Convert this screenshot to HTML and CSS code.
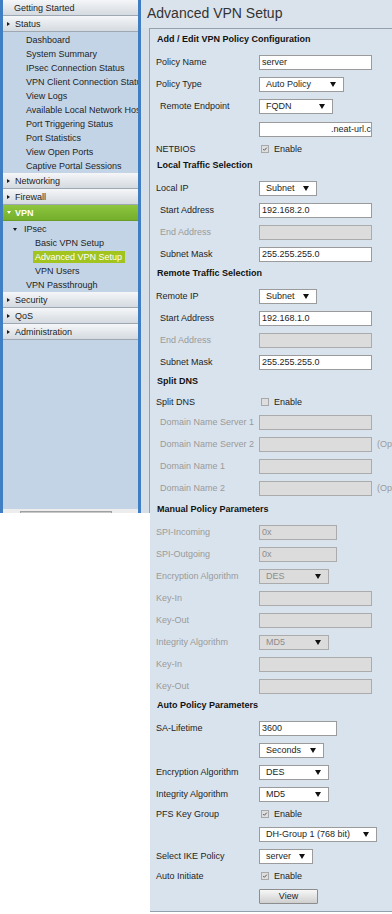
FILE: index.html
```html
<!DOCTYPE html>
<html lang="en">
<head>
  <meta charset="UTF-8" />
  <meta name="viewport" content="width=device-width, initial-scale=1.0" />
  <title>Advanced VPN Setup</title>
  <link rel="stylesheet" href="styles.css">
</head>
<body>
  <div class="page">
    <div class="sidebar">
      <div class="menu-head plain">Getting Started</div>
      <div class="menu-head"><span class="tri-right"></span>Status</div>
      <div class="submenu">
        <div class="menu-item">Dashboard</div>
        <div class="menu-item">System Summary</div>
        <div class="menu-item">IPsec Connection Status</div>
        <div class="menu-item">VPN Client Connection Status</div>
        <div class="menu-item">View Logs</div>
        <div class="menu-item">Available Local Network Hosts</div>
        <div class="menu-item">Port Triggering Status</div>
        <div class="menu-item">Port Statistics</div>
        <div class="menu-item">View Open Ports</div>
        <div class="menu-item">Captive Portal Sessions</div>
      </div>
      <div class="menu-head"><span class="tri-right"></span>Networking</div>
      <div class="menu-head"><span class="tri-right"></span>Firewall</div>
      <div class="menu-head active"><span class="tri-down"></span>VPN</div>
      <div class="submenu">
        <div class="menu-item group"><span class="tri-down dark"></span>IPsec</div>
        <div class="menu-item sub">Basic VPN Setup</div>
        <div class="menu-item sub"><span class="current">Advanced VPN Setup</span></div>
        <div class="menu-item sub">VPN Users</div>
        <div class="menu-item">VPN Passthrough</div>
      </div>
      <div class="menu-head"><span class="tri-right"></span>Security</div>
      <div class="menu-head"><span class="tri-right"></span>QoS</div>
      <div class="menu-head"><span class="tri-right"></span>Administration</div>
      <div class="menu-fill"></div>
      <div class="menu-scroll"><span class="thumb"></span></div>
    </div>

    <h1 class="page-title">Advanced VPN Setup</h1>
    <div class="gutter"></div>

    <div class="panel">
      <div class="section">Add / Edit VPN Policy Configuration</div>
      <div class="row"><span class="lbl">Policy Name</span><input class="field" type="text" value="server"></div>
      <div class="row"><span class="lbl">Policy Type</span><div class="select w85">Auto Policy</div></div>
      <div class="row"><span class="lbl indent">Remote Endpoint</span><div class="select w74">FQDN</div></div>
      <div class="row tall"><span class="lbl"></span><input class="field right" type="text" value=".neat-url.c"></div>
      <div class="row check-row short"><span class="lbl">NETBIOS</span><span class="check on"><svg viewBox="0 0 8 8"><path d="M1.6 4.1 L3.2 5.7 L6.4 2.2"/></svg></span>Enable</div>

      <div class="section">Local Traffic Selection</div>
      <div class="row"><span class="lbl">Local IP</span><div class="select w58">Subnet</div></div>
      <div class="row"><span class="lbl indent">Start Address</span><input class="field" type="text" value="192.168.2.0"></div>
      <div class="row"><span class="lbl indent off">End Address</span><input class="field" type="text" disabled></div>
      <div class="row"><span class="lbl indent">Subnet Mask</span><input class="field" type="text" value="255.255.255.0"></div>

      <div class="section">Remote Traffic Selection</div>
      <div class="row"><span class="lbl">Remote IP</span><div class="select w58">Subnet</div></div>
      <div class="row"><span class="lbl indent">Start Address</span><input class="field" type="text" value="192.168.1.0"></div>
      <div class="row"><span class="lbl indent off">End Address</span><input class="field" type="text" disabled></div>
      <div class="row"><span class="lbl indent">Subnet Mask</span><input class="field" type="text" value="255.255.255.0"></div>

      <div class="section">Split DNS</div>
      <div class="row check-row"><span class="lbl">Split DNS</span><span class="check"></span>Enable</div>
      <div class="row"><span class="lbl indent off">Domain Name Server 1</span><input class="field" type="text" disabled></div>
      <div class="row"><span class="lbl indent off">Domain Name Server 2</span><input class="field" type="text" disabled><span class="note">(Optional)</span></div>
      <div class="row"><span class="lbl indent off">Domain Name 1</span><input class="field" type="text" disabled></div>
      <div class="row"><span class="lbl indent off">Domain Name 2</span><input class="field" type="text" disabled><span class="note">(Optional)</span></div>

      <div class="section spaced">Manual Policy Parameters</div>
      <div class="row"><span class="lbl off">SPI-Incoming</span><input class="field w78" type="text" value="0x" disabled></div>
      <div class="row"><span class="lbl off">SPI-Outgoing</span><input class="field w78" type="text" value="0x" disabled></div>
      <div class="row"><span class="lbl off">Encryption Algorithm</span><div class="select w70 off">DES</div></div>
      <div class="row"><span class="lbl off">Key-In</span><input class="field" type="text" disabled></div>
      <div class="row"><span class="lbl off">Key-Out</span><input class="field" type="text" disabled></div>
      <div class="row"><span class="lbl off">Integrity Algorithm</span><div class="select w70 off">MD5</div></div>
      <div class="row"><span class="lbl off">Key-In</span><input class="field" type="text" disabled></div>
      <div class="row"><span class="lbl off">Key-Out</span><input class="field" type="text" disabled></div>

      <div class="section">Auto Policy Parameters</div>
      <div class="row"><span class="lbl">SA-Lifetime</span><input class="field w78" type="text" value="3600"></div>
      <div class="row"><span class="lbl"></span><div class="select w65">Seconds</div></div>
      <div class="row"><span class="lbl">Encryption Algorithm</span><div class="select w70">DES</div></div>
      <div class="row"><span class="lbl">Integrity Algorithm</span><div class="select w70">MD5</div></div>
      <div class="row check-row"><span class="lbl">PFS Key Group</span><span class="check on"><svg viewBox="0 0 8 8"><path d="M1.6 4.1 L3.2 5.7 L6.4 2.2"/></svg></span>Enable</div>
      <div class="row"><span class="lbl"></span><div class="select w118">DH-Group 1 (768 bit)</div></div>
      <div class="row"><span class="lbl">Select IKE Policy</span><div class="select w54">server</div></div>
      <div class="row check-row"><span class="lbl">Auto Initiate</span><span class="check on"><svg viewBox="0 0 8 8"><path d="M1.6 4.1 L3.2 5.7 L6.4 2.2"/></svg></span>Enable</div>
      <div class="row"><span class="lbl"></span><button class="btn" type="button">View</button></div>
    </div>
  </div>
</body>
</html>
```

FILE: styles.css
```css
* { box-sizing: border-box; margin: 0; padding: 0; }
html, body { overflow: hidden; }
body {
  background: #fff;
  color: #1e1e1e;
  font-family: 'Liberation Sans', Arial, sans-serif;
  font-size: 9px;
}
.page {
  display: grid;
  grid-template-columns: 141px 9px 1fr;
  grid-template-rows: 28px auto;
  width: 392px;
}

/* left menu */
.sidebar {
  grid-column: 1;
  grid-row: 1 / 3;
  align-self: start;
  height: 513px;
  display: flex;
  flex-direction: column;
  background: #c3d4e7;
  border-left: 3px solid #3f7ec2;
  border-right: 3px solid #3f7ec2;
  overflow: hidden;
  white-space: nowrap;
}
.menu-head {
  display: flex;
  align-items: center;
  flex-shrink: 0;
  height: 16px;
  padding-left: 4px;
  background: linear-gradient(#f5f6f8, #d4dae0);
  border-bottom: 1px solid #9ea8b3;
  color: #1c1c1c;
}
.menu-head.plain { padding-left: 11px; }
.menu-head.active {
  background: linear-gradient(#8ec63f, #74ae2b);
  border-bottom-color: #679b2a;
  color: #fff;
  font-weight: bold;
}
.tri-right {
  width: 0;
  height: 0;
  margin-right: 5px;
  border-top: 2.5px solid transparent;
  border-bottom: 2.5px solid transparent;
  border-left: 3px solid #1c1c1c;
}
.tri-down {
  width: 0;
  height: 0;
  margin-right: 4px;
  border-left: 2px solid transparent;
  border-right: 2px solid transparent;
  border-top: 3px solid #fff;
}
.tri-down.dark {
  margin-right: 7px;
  border-left-width: 2.5px;
  border-right-width: 2.5px;
  border-top-color: #1c1c1c;
}
.submenu { padding-top: 1px; flex-shrink: 0; }
.menu-item {
  display: flex;
  align-items: center;
  height: 14px;
  padding-left: 23px;
  overflow: hidden;
}
.menu-item.group { padding-left: 10px; }
.menu-item.sub { padding-left: 32px; }
.current {
  display: inline-block;
  line-height: 12px;
  margin-left: -2px;
  padding: 0 3px 0 2px;
  background: #a3c41f;
  color: #fff;
}
.menu-fill { flex: 1; }
.menu-scroll {
  height: 4px;
  flex-shrink: 0;
  background: #ededed;
  padding: 2px 0 0 17px;
}
.thumb {
  display: block;
  width: 92px;
  height: 2px;
  background: #c8c8c8;
  border: 1px solid #a0a0a0;
  border-bottom: none;
}

/* main */
.page-title {
  grid-column: 2 / 4;
  grid-row: 1;
  padding-left: 6px;
  background: #dae3ec;
  font-size: 14px;
  font-weight: normal;
  line-height: 26px;
  color: #333;
  white-space: nowrap;
}
.gutter {
  grid-column: 2;
  grid-row: 2;
  align-self: start;
  height: 485px;
  background: #d7e0e9;
  border-right: 1px solid #93a1af;
}
.panel {
  grid-column: 3;
  grid-row: 2;
  background: #d9e3ed;
  border-top: 1px solid #93a1af;
  border-bottom: 1px solid #93a1af;
  padding: 2px 0 4px 6px;
  white-space: nowrap;
}
.section {
  line-height: 16px;
  padding: 0 0 4px 1px;
  font-weight: bold;
  color: #111;
}
.section.spaced { margin-top: 2px; }

.row {
  display: flex;
  align-items: center;
  height: 22px;
}
.row.tall { height: 24px; }
.row.check-row { height: 18px; }
.row.short { height: 16px; }
.lbl {
  width: 103px;
  flex-shrink: 0;
}
.lbl.indent { padding-left: 4px; }
.lbl.off { color: #9a9a9a; }

.field {
  width: 113px;
  height: 15px;
  padding: 0 2px;
  border: 1px solid #9b9b9b;
  border-radius: 0;
  background: #fff;
  font: inherit;
  color: #1e1e1e;
  outline: none;
}
.field.right { text-align: right; padding-right: 0; }
.field:disabled {
  background: #dcdcdc;
  border-color: #ababab;
  color: #8c8c8c;
}

.select {
  display: flex;
  align-items: center;
  justify-content: space-between;
  height: 15px;
  padding: 0 7px 0 6px;
  border: 1px solid #9b9b9b;
  background: #fff;
}
.select::after {
  content: "";
  width: 0;
  height: 0;
  border-left: 3px solid transparent;
  border-right: 3px solid transparent;
  border-top: 5px solid #111;
}
.select.off {
  background: #dcdcdc;
  border-color: #ababab;
  color: #8c8c8c;
}
.w54 { width: 54px; }
.w58 { width: 58px; }
.w65 { width: 65px; }
.w70 { width: 70px; }
.w74 { width: 74px; }
.w78 { width: 78px; }
.w85 { width: 85px; }
.w118 { width: 118px; }

.check {
  display: block;
  width: 8px;
  height: 8px;
  margin: 0 5px 0 2px;
  border: 1px solid #a8a8a8;
  background: #dedede;
}
.check svg {
  display: block;
  width: 6px;
  height: 6px;
}
.check svg path {
  fill: none;
  stroke: #555;
  stroke-width: 1.3;
}
.note {
  margin-left: 5px;
  color: #9a9a9a;
}
.btn {
  width: 59px;
  height: 15px;
  padding: 0;
  border: 1px solid #8d8d8d;
  border-radius: 1px;
  background: linear-gradient(#f7f7f7, #cfcfcf);
  font: inherit;
  color: #1e1e1e;
}
```
